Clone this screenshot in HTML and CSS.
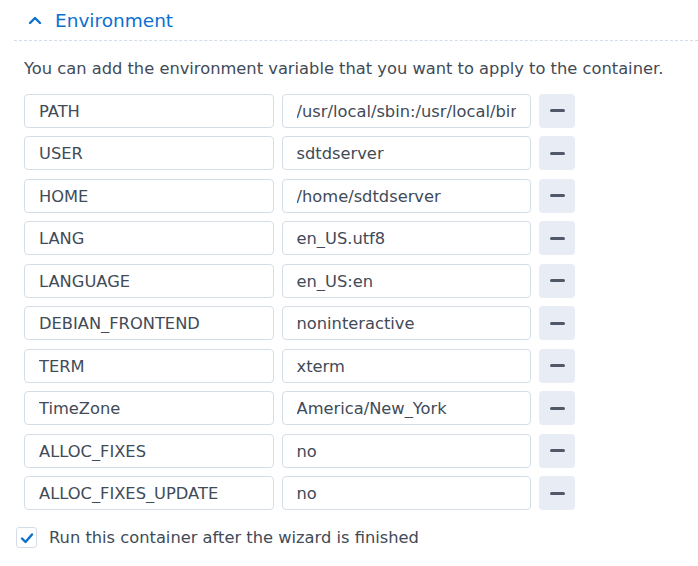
FILE: index.html
```html
<!DOCTYPE html>
<html lang="en">
<head>
    <meta charset="UTF-8">
    <title>Environment</title>
    <link rel="stylesheet" href="styles.css">
</head>
<body>
    <section class="panel">
        <div class="panel-head">
            <svg class="chevron" width="14" height="10" viewBox="0 0 14 10">
                <path d="M2 8 L7 3 L12 8" fill="none" stroke="#0b6fd0" stroke-width="2.4" stroke-linecap="round" stroke-linejoin="round"/>
            </svg>
            <span class="panel-title">Environment</span>
        </div>

        <div class="panel-body">
            <p class="desc">You can add the environment variable that you want to apply to the container.</p>

            <div class="env-list">
                <div class="env-row">
                    <input class="field" type="text" value="PATH">
                    <input class="field" type="text" value="/usr/local/sbin:/usr/local/bin:/usr/sbin:/usr/bin">
                    <button class="remove-btn"><span></span></button>
                </div>
                <div class="env-row">
                    <input class="field" type="text" value="USER">
                    <input class="field" type="text" value="sdtdserver">
                    <button class="remove-btn"><span></span></button>
                </div>
                <div class="env-row">
                    <input class="field" type="text" value="HOME">
                    <input class="field" type="text" value="/home/sdtdserver">
                    <button class="remove-btn"><span></span></button>
                </div>
                <div class="env-row">
                    <input class="field" type="text" value="LANG">
                    <input class="field" type="text" value="en_US.utf8">
                    <button class="remove-btn"><span></span></button>
                </div>
                <div class="env-row">
                    <input class="field" type="text" value="LANGUAGE">
                    <input class="field" type="text" value="en_US:en">
                    <button class="remove-btn"><span></span></button>
                </div>
                <div class="env-row">
                    <input class="field" type="text" value="DEBIAN_FRONTEND">
                    <input class="field" type="text" value="noninteractive">
                    <button class="remove-btn"><span></span></button>
                </div>
                <div class="env-row">
                    <input class="field" type="text" value="TERM">
                    <input class="field" type="text" value="xterm">
                    <button class="remove-btn"><span></span></button>
                </div>
                <div class="env-row">
                    <input class="field" type="text" value="TimeZone">
                    <input class="field" type="text" value="America/New_York">
                    <button class="remove-btn"><span></span></button>
                </div>
                <div class="env-row">
                    <input class="field" type="text" value="ALLOC_FIXES">
                    <input class="field" type="text" value="no">
                    <button class="remove-btn"><span></span></button>
                </div>
                <div class="env-row">
                    <input class="field" type="text" value="ALLOC_FIXES_UPDATE">
                    <input class="field" type="text" value="no">
                    <button class="remove-btn"><span></span></button>
                </div>
            </div>
        </div>

        <label class="check-row">
            <span class="checkbox">
                <svg width="14" height="12" viewBox="0 0 14 12">
                    <path d="M2 6.5 L5.5 10 L12 2.5" fill="none" stroke="#0b6fd0" stroke-width="2.4" stroke-linecap="round" stroke-linejoin="round"/>
                </svg>
            </span>
            <span>Run this container after the wizard is finished</span>
        </label>
    </section>
</body>
</html>
```

FILE: styles.css
```css
body {
    margin: 0;
    padding: 0;
    background-color: #ffffff;
    font-family: "DejaVu Sans", Verdana, sans-serif;
    color: #414b58;
    overflow: hidden;
}
.panel {
    padding-left: 14px;
}
.panel-head {
    display: flex;
    align-items: center;
    height: 41px;
    padding-left: 14px;
    border-bottom: 1px dashed #d3dde7;
    box-sizing: border-box;
}
.chevron {
    margin-right: 13px;
}
.panel-title {
    font-size: 18.5px;
    color: #0b6fd0;
}
.panel-body {
    padding-left: 10px;
}
.desc {
    margin: 18px 0 0 0;
    font-size: 16.3px;
    line-height: 20px;
}
.env-list {
    display: flex;
    flex-direction: column;
    gap: 8.5px;
    margin-top: 14.5px;
}
.env-row {
    display: flex;
    gap: 8px;
}
.field {
    width: 249.5px;
    height: 34px;
    margin: 0;
    box-sizing: border-box;
    border: 1px solid #d5dee8;
    border-radius: 4px;
    padding: 1px 14px 0 14px;
    font-family: "DejaVu Sans", Verdana, sans-serif;
    font-size: 16.3px;
    color: #414b58;
    background-color: #ffffff;
    outline: none;
}
.remove-btn {
    width: 36px;
    height: 34px;
    border: none;
    border-radius: 4px;
    background-color: #e8ecf4;
    display: flex;
    align-items: center;
    justify-content: center;
    padding: 0;
}
.remove-btn span {
    width: 15px;
    height: 3px;
    border-radius: 1.5px;
    background-color: #4f5967;
}
.check-row {
    display: flex;
    align-items: center;
    margin-top: 17px;
    padding-left: 2px;
    font-size: 16.3px;
}
.checkbox {
    width: 21px;
    height: 21px;
    box-sizing: border-box;
    border: 1px solid #d5dee8;
    border-radius: 3px;
    display: flex;
    align-items: center;
    justify-content: center;
    margin-right: 12px;
}
```
